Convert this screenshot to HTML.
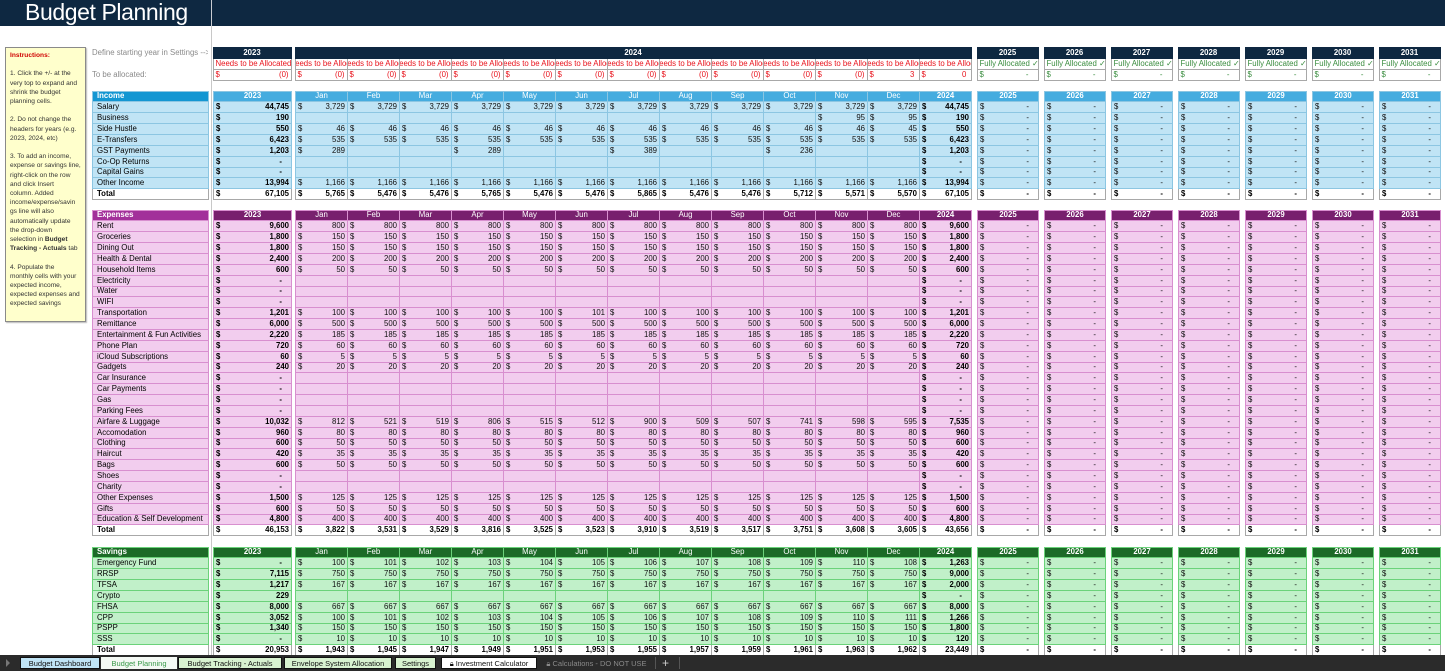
<!DOCTYPE html>
<html><head><meta charset="utf-8"><style>
*{margin:0;padding:0;box-sizing:border-box}
body{width:1445px;height:671px;overflow:hidden;background:#fff;position:relative;font-family:"Liberation Sans Narrow","Liberation Sans",sans-serif}
#hdr{position:absolute;left:0;top:0;width:1445px;height:26px;background:#0e2841}
#hdr span{position:absolute;left:25px;top:-1px;color:#fff;font:23px "Liberation Sans",sans-serif;letter-spacing:-0.4px}
#hdr b{position:absolute;left:211px;top:0;width:1px;height:26px;background:#c9ccd2}
#vl{position:absolute;left:211px;top:26px;width:1px;height:630px;background:#c8c8c8}
#ins{position:absolute;left:5px;top:47px;width:81px;height:275px;background:#ffffcc;border:1px solid #8a8a8a;box-shadow:1px 1px 1px #bbb;font:6.6px/9.2px "Liberation Sans",sans-serif;color:#333;padding:3px 0 0 4px;white-space:nowrap}
#ins .r{color:#d00000;font-weight:bold}
table{position:absolute;left:92px;border-collapse:collapse;table-layout:fixed;width:1348px;font-size:7.8px}
tr{height:10.86px}
td{padding:0 2px;border:1px solid var(--b);background:var(--r);text-align:right;white-space:nowrap;overflow:hidden;line-height:8px;color:#111}
td i{float:left;font-style:normal}
td.g{background:none;border:none}
td.l{text-align:left;padding-left:4px;color:#000}
td.b{font-weight:bold;color:#000}
td.d{padding-right:9px}
tr.h td{text-align:center;color:#fff;background:var(--hc)}
tr.h td.l{background:var(--hl);text-align:left;font-weight:bold;color:#fff}
tr.h td.g{background:none}
tr.t td{background:#fff;border-color:#a8a8a8;font-weight:bold;color:#000}
tr.t td.g{background:none}
#inc{top:90.5px;--r:#c0e4f5;--b:#8cc6e2;--hc:#45acdf;--hl:#1396d2}
#exp{top:209.5px;--r:#f2cdee;--b:#d88fcf;--hc:#78206e;--hl:#a2309a}
#sav{top:546.5px;--r:#c1f0c9;--b:#6bd27a;--hc:#1c6a27;--hl:#1c6a27}
#top{top:47px;--r:#fff;--b:#a8a8a8}
#top td.n{background:#0e2841;color:#fff;font-weight:bold;text-align:center;border-color:#0e2841}
#top td.x{border:none;background:none;color:#8a8a8a;text-align:left;padding-left:0}
#top .rd{color:#e8121b}
#top .gr{color:#3a8d3f}
#top td.c{text-align:center}
#top td.m{text-align:left;text-indent:-6px;color:#e8121b;padding:0}
#tabs{position:absolute;left:0;top:655px;width:1445px;height:16px;background:#2b2b2b}
.tab{position:absolute;top:2px;height:12px;font:7.5px/11px "Liberation Sans Narrow","Liberation Sans",sans-serif;text-align:center;border:1px solid #111;color:#111}
</style></head><body>
<div id="hdr"><span>Budget Planning</span><b></b></div>
<div id="vl"></div>
<div id="ins"><span class="r">Instructions:</span><br><br>1. Click the +/- at the<br>very top to expand and<br>shrink the budget<br>planning cells.<br><br>2. Do not change the<br>headers for years (e.g.<br>2023, 2024, etc)<br><br>3. To add an income,<br>expense or savings line,<br>right-click on the row<br>and click Insert<br>column. Added<br>income/expense/savin<br>gs line will also<br>automatically update<br>the drop-down<br>selection in <b>Budget</b><br><b>Tracking - Actuals</b> tab<br><br>4. Populate the<br>monthly cells with your<br>expected income,<br>expected expenses and<br>expected savings</div>

<table id="top"><colgroup><col style="width:116px"><col style="width:5px"><col style="width:78px"><col style="width:4px"><col span="13" style="width:52px"><col style="width:6px"><col style="width:61px"><col style="width:6px"><col style="width:61px"><col style="width:6px"><col style="width:61px"><col style="width:6px"><col style="width:61px"><col style="width:6px"><col style="width:61px"><col style="width:6px"><col style="width:61px"><col style="width:6px"><col style="width:61px"></colgroup>
<tr style="height:11px"><td class="x">Define starting year in Settings --&gt;</td><td class="g"></td><td class="n">2023</td><td class="g"></td><td class="n" colspan="13">2024</td><td class="g"></td><td class="n">2025</td><td class="g"></td><td class="n">2026</td><td class="g"></td><td class="n">2027</td><td class="g"></td><td class="n">2028</td><td class="g"></td><td class="n">2029</td><td class="g"></td><td class="n">2030</td><td class="g"></td><td class="n">2031</td></tr>
<tr style="height:10.5px"><td class="x"></td><td class="g"></td><td class="c rd">Needs to be Allocated</td><td class="g"></td><td class="m">Needs to be Allocated</td><td class="m">Needs to be Allocated</td><td class="m">Needs to be Allocated</td><td class="m">Needs to be Allocated</td><td class="m">Needs to be Allocated</td><td class="m">Needs to be Allocated</td><td class="m">Needs to be Allocated</td><td class="m">Needs to be Allocated</td><td class="m">Needs to be Allocated</td><td class="m">Needs to be Allocated</td><td class="m">Needs to be Allocated</td><td class="m">Needs to be Allocated</td><td class="m">Needs to be Allocated</td><td class="g"></td><td class="c gr">Fully Allocated ✓</td><td class="g"></td><td class="c gr">Fully Allocated ✓</td><td class="g"></td><td class="c gr">Fully Allocated ✓</td><td class="g"></td><td class="c gr">Fully Allocated ✓</td><td class="g"></td><td class="c gr">Fully Allocated ✓</td><td class="g"></td><td class="c gr">Fully Allocated ✓</td><td class="g"></td><td class="c gr">Fully Allocated ✓</td></tr>
<tr style="height:11.5px"><td class="x" style="vertical-align:middle">To be allocated:</td><td class="g"></td><td class="rd"><i>$</i>(0)</td><td class="g"></td><td class="rd"><i>$</i>(0)</td><td class="rd"><i>$</i>(0)</td><td class="rd"><i>$</i>(0)</td><td class="rd"><i>$</i>(0)</td><td class="rd"><i>$</i>(0)</td><td class="rd"><i>$</i>(0)</td><td class="rd"><i>$</i>(0)</td><td class="rd"><i>$</i>(0)</td><td class="rd"><i>$</i>(0)</td><td class="rd"><i>$</i>(0)</td><td class="rd"><i>$</i>(0)</td><td class="rd"><i>$</i>3&nbsp;</td><td class="rd"><i>$</i>0&nbsp;</td><td class="g"></td><td class="gr d"><i>$</i>-</td><td class="g"></td><td class="gr d"><i>$</i>-</td><td class="g"></td><td class="gr d"><i>$</i>-</td><td class="g"></td><td class="gr d"><i>$</i>-</td><td class="g"></td><td class="gr d"><i>$</i>-</td><td class="g"></td><td class="gr d"><i>$</i>-</td><td class="g"></td><td class="gr d"><i>$</i>-</td></tr>
</table>

<table id="inc"><colgroup><col style="width:116px"><col style="width:5px"><col style="width:78px"><col style="width:4px"><col span="13" style="width:52px"><col style="width:6px"><col style="width:61px"><col style="width:6px"><col style="width:61px"><col style="width:6px"><col style="width:61px"><col style="width:6px"><col style="width:61px"><col style="width:6px"><col style="width:61px"><col style="width:6px"><col style="width:61px"><col style="width:6px"><col style="width:61px"></colgroup>
<tr class="h"><td class="l">Income</td><td class="g"></td><td class="b">2023</td><td class="g"></td><td>Jan</td><td>Feb</td><td>Mar</td><td>Apr</td><td>May</td><td>Jun</td><td>Jul</td><td>Aug</td><td>Sep</td><td>Oct</td><td>Nov</td><td>Dec</td><td class="b">2024</td><td class="g"></td><td class="b">2025</td><td class="g"></td><td class="b">2026</td><td class="g"></td><td class="b">2027</td><td class="g"></td><td class="b">2028</td><td class="g"></td><td class="b">2029</td><td class="g"></td><td class="b">2030</td><td class="g"></td><td class="b">2031</td></tr>
<tr><td class="l">Salary</td><td class="g"></td><td class="b"><i>$</i>44,745</td><td class="g"></td><td><i>$</i>3,729</td><td><i>$</i>3,729</td><td><i>$</i>3,729</td><td><i>$</i>3,729</td><td><i>$</i>3,729</td><td><i>$</i>3,729</td><td><i>$</i>3,729</td><td><i>$</i>3,729</td><td><i>$</i>3,729</td><td><i>$</i>3,729</td><td><i>$</i>3,729</td><td><i>$</i>3,729</td><td class="b"><i>$</i>44,745</td><td class="g"></td><td class="d"><i>$</i>-</td><td class="g"></td><td class="d"><i>$</i>-</td><td class="g"></td><td class="d"><i>$</i>-</td><td class="g"></td><td class="d"><i>$</i>-</td><td class="g"></td><td class="d"><i>$</i>-</td><td class="g"></td><td class="d"><i>$</i>-</td><td class="g"></td><td class="d"><i>$</i>-</td></tr>
<tr><td class="l">Business</td><td class="g"></td><td class="b"><i>$</i>190</td><td class="g"></td><td></td><td></td><td></td><td></td><td></td><td></td><td></td><td></td><td></td><td></td><td><i>$</i>95</td><td><i>$</i>95</td><td class="b"><i>$</i>190</td><td class="g"></td><td class="d"><i>$</i>-</td><td class="g"></td><td class="d"><i>$</i>-</td><td class="g"></td><td class="d"><i>$</i>-</td><td class="g"></td><td class="d"><i>$</i>-</td><td class="g"></td><td class="d"><i>$</i>-</td><td class="g"></td><td class="d"><i>$</i>-</td><td class="g"></td><td class="d"><i>$</i>-</td></tr>
<tr><td class="l">Side Hustle</td><td class="g"></td><td class="b"><i>$</i>550</td><td class="g"></td><td><i>$</i>46</td><td><i>$</i>46</td><td><i>$</i>46</td><td><i>$</i>46</td><td><i>$</i>46</td><td><i>$</i>46</td><td><i>$</i>46</td><td><i>$</i>46</td><td><i>$</i>46</td><td><i>$</i>46</td><td><i>$</i>46</td><td><i>$</i>45</td><td class="b"><i>$</i>550</td><td class="g"></td><td class="d"><i>$</i>-</td><td class="g"></td><td class="d"><i>$</i>-</td><td class="g"></td><td class="d"><i>$</i>-</td><td class="g"></td><td class="d"><i>$</i>-</td><td class="g"></td><td class="d"><i>$</i>-</td><td class="g"></td><td class="d"><i>$</i>-</td><td class="g"></td><td class="d"><i>$</i>-</td></tr>
<tr><td class="l">E-Transfers</td><td class="g"></td><td class="b"><i>$</i>6,423</td><td class="g"></td><td><i>$</i>535</td><td><i>$</i>535</td><td><i>$</i>535</td><td><i>$</i>535</td><td><i>$</i>535</td><td><i>$</i>535</td><td><i>$</i>535</td><td><i>$</i>535</td><td><i>$</i>535</td><td><i>$</i>535</td><td><i>$</i>535</td><td><i>$</i>535</td><td class="b"><i>$</i>6,423</td><td class="g"></td><td class="d"><i>$</i>-</td><td class="g"></td><td class="d"><i>$</i>-</td><td class="g"></td><td class="d"><i>$</i>-</td><td class="g"></td><td class="d"><i>$</i>-</td><td class="g"></td><td class="d"><i>$</i>-</td><td class="g"></td><td class="d"><i>$</i>-</td><td class="g"></td><td class="d"><i>$</i>-</td></tr>
<tr><td class="l">GST Payments</td><td class="g"></td><td class="b"><i>$</i>1,203</td><td class="g"></td><td><i>$</i>289</td><td></td><td></td><td><i>$</i>289</td><td></td><td></td><td><i>$</i>389</td><td></td><td></td><td><i>$</i>236</td><td></td><td></td><td class="b"><i>$</i>1,203</td><td class="g"></td><td class="d"><i>$</i>-</td><td class="g"></td><td class="d"><i>$</i>-</td><td class="g"></td><td class="d"><i>$</i>-</td><td class="g"></td><td class="d"><i>$</i>-</td><td class="g"></td><td class="d"><i>$</i>-</td><td class="g"></td><td class="d"><i>$</i>-</td><td class="g"></td><td class="d"><i>$</i>-</td></tr>
<tr><td class="l">Co-Op Returns</td><td class="g"></td><td class="b d"><i>$</i>-</td><td class="g"></td><td></td><td></td><td></td><td></td><td></td><td></td><td></td><td></td><td></td><td></td><td></td><td></td><td class="b d"><i>$</i>-</td><td class="g"></td><td class="d"><i>$</i>-</td><td class="g"></td><td class="d"><i>$</i>-</td><td class="g"></td><td class="d"><i>$</i>-</td><td class="g"></td><td class="d"><i>$</i>-</td><td class="g"></td><td class="d"><i>$</i>-</td><td class="g"></td><td class="d"><i>$</i>-</td><td class="g"></td><td class="d"><i>$</i>-</td></tr>
<tr><td class="l">Capital Gains</td><td class="g"></td><td class="b d"><i>$</i>-</td><td class="g"></td><td></td><td></td><td></td><td></td><td></td><td></td><td></td><td></td><td></td><td></td><td></td><td></td><td class="b d"><i>$</i>-</td><td class="g"></td><td class="d"><i>$</i>-</td><td class="g"></td><td class="d"><i>$</i>-</td><td class="g"></td><td class="d"><i>$</i>-</td><td class="g"></td><td class="d"><i>$</i>-</td><td class="g"></td><td class="d"><i>$</i>-</td><td class="g"></td><td class="d"><i>$</i>-</td><td class="g"></td><td class="d"><i>$</i>-</td></tr>
<tr><td class="l">Other Income</td><td class="g"></td><td class="b"><i>$</i>13,994</td><td class="g"></td><td><i>$</i>1,166</td><td><i>$</i>1,166</td><td><i>$</i>1,166</td><td><i>$</i>1,166</td><td><i>$</i>1,166</td><td><i>$</i>1,166</td><td><i>$</i>1,166</td><td><i>$</i>1,166</td><td><i>$</i>1,166</td><td><i>$</i>1,166</td><td><i>$</i>1,166</td><td><i>$</i>1,166</td><td class="b"><i>$</i>13,994</td><td class="g"></td><td class="d"><i>$</i>-</td><td class="g"></td><td class="d"><i>$</i>-</td><td class="g"></td><td class="d"><i>$</i>-</td><td class="g"></td><td class="d"><i>$</i>-</td><td class="g"></td><td class="d"><i>$</i>-</td><td class="g"></td><td class="d"><i>$</i>-</td><td class="g"></td><td class="d"><i>$</i>-</td></tr>
<tr class="t"><td class="l">Total</td><td class="g"></td><td><i>$</i>67,105</td><td class="g"></td><td><i>$</i>5,765</td><td><i>$</i>5,476</td><td><i>$</i>5,476</td><td><i>$</i>5,765</td><td><i>$</i>5,476</td><td><i>$</i>5,476</td><td><i>$</i>5,865</td><td><i>$</i>5,476</td><td><i>$</i>5,476</td><td><i>$</i>5,712</td><td><i>$</i>5,571</td><td><i>$</i>5,570</td><td><i>$</i>67,105</td><td class="g"></td><td class="d"><i>$</i>-</td><td class="g"></td><td class="d"><i>$</i>-</td><td class="g"></td><td class="d"><i>$</i>-</td><td class="g"></td><td class="d"><i>$</i>-</td><td class="g"></td><td class="d"><i>$</i>-</td><td class="g"></td><td class="d"><i>$</i>-</td><td class="g"></td><td class="d"><i>$</i>-</td></tr>
</table>

<table id="exp"><colgroup><col style="width:116px"><col style="width:5px"><col style="width:78px"><col style="width:4px"><col span="13" style="width:52px"><col style="width:6px"><col style="width:61px"><col style="width:6px"><col style="width:61px"><col style="width:6px"><col style="width:61px"><col style="width:6px"><col style="width:61px"><col style="width:6px"><col style="width:61px"><col style="width:6px"><col style="width:61px"><col style="width:6px"><col style="width:61px"></colgroup>
<tr class="h"><td class="l">Expenses</td><td class="g"></td><td class="b">2023</td><td class="g"></td><td>Jan</td><td>Feb</td><td>Mar</td><td>Apr</td><td>May</td><td>Jun</td><td>Jul</td><td>Aug</td><td>Sep</td><td>Oct</td><td>Nov</td><td>Dec</td><td class="b">2024</td><td class="g"></td><td class="b">2025</td><td class="g"></td><td class="b">2026</td><td class="g"></td><td class="b">2027</td><td class="g"></td><td class="b">2028</td><td class="g"></td><td class="b">2029</td><td class="g"></td><td class="b">2030</td><td class="g"></td><td class="b">2031</td></tr>
<tr><td class="l">Rent</td><td class="g"></td><td class="b"><i>$</i>9,600</td><td class="g"></td><td><i>$</i>800</td><td><i>$</i>800</td><td><i>$</i>800</td><td><i>$</i>800</td><td><i>$</i>800</td><td><i>$</i>800</td><td><i>$</i>800</td><td><i>$</i>800</td><td><i>$</i>800</td><td><i>$</i>800</td><td><i>$</i>800</td><td><i>$</i>800</td><td class="b"><i>$</i>9,600</td><td class="g"></td><td class="d"><i>$</i>-</td><td class="g"></td><td class="d"><i>$</i>-</td><td class="g"></td><td class="d"><i>$</i>-</td><td class="g"></td><td class="d"><i>$</i>-</td><td class="g"></td><td class="d"><i>$</i>-</td><td class="g"></td><td class="d"><i>$</i>-</td><td class="g"></td><td class="d"><i>$</i>-</td></tr>
<tr><td class="l">Groceries</td><td class="g"></td><td class="b"><i>$</i>1,800</td><td class="g"></td><td><i>$</i>150</td><td><i>$</i>150</td><td><i>$</i>150</td><td><i>$</i>150</td><td><i>$</i>150</td><td><i>$</i>150</td><td><i>$</i>150</td><td><i>$</i>150</td><td><i>$</i>150</td><td><i>$</i>150</td><td><i>$</i>150</td><td><i>$</i>150</td><td class="b"><i>$</i>1,800</td><td class="g"></td><td class="d"><i>$</i>-</td><td class="g"></td><td class="d"><i>$</i>-</td><td class="g"></td><td class="d"><i>$</i>-</td><td class="g"></td><td class="d"><i>$</i>-</td><td class="g"></td><td class="d"><i>$</i>-</td><td class="g"></td><td class="d"><i>$</i>-</td><td class="g"></td><td class="d"><i>$</i>-</td></tr>
<tr><td class="l">Dining Out</td><td class="g"></td><td class="b"><i>$</i>1,800</td><td class="g"></td><td><i>$</i>150</td><td><i>$</i>150</td><td><i>$</i>150</td><td><i>$</i>150</td><td><i>$</i>150</td><td><i>$</i>150</td><td><i>$</i>150</td><td><i>$</i>150</td><td><i>$</i>150</td><td><i>$</i>150</td><td><i>$</i>150</td><td><i>$</i>150</td><td class="b"><i>$</i>1,800</td><td class="g"></td><td class="d"><i>$</i>-</td><td class="g"></td><td class="d"><i>$</i>-</td><td class="g"></td><td class="d"><i>$</i>-</td><td class="g"></td><td class="d"><i>$</i>-</td><td class="g"></td><td class="d"><i>$</i>-</td><td class="g"></td><td class="d"><i>$</i>-</td><td class="g"></td><td class="d"><i>$</i>-</td></tr>
<tr><td class="l">Health &amp; Dental</td><td class="g"></td><td class="b"><i>$</i>2,400</td><td class="g"></td><td><i>$</i>200</td><td><i>$</i>200</td><td><i>$</i>200</td><td><i>$</i>200</td><td><i>$</i>200</td><td><i>$</i>200</td><td><i>$</i>200</td><td><i>$</i>200</td><td><i>$</i>200</td><td><i>$</i>200</td><td><i>$</i>200</td><td><i>$</i>200</td><td class="b"><i>$</i>2,400</td><td class="g"></td><td class="d"><i>$</i>-</td><td class="g"></td><td class="d"><i>$</i>-</td><td class="g"></td><td class="d"><i>$</i>-</td><td class="g"></td><td class="d"><i>$</i>-</td><td class="g"></td><td class="d"><i>$</i>-</td><td class="g"></td><td class="d"><i>$</i>-</td><td class="g"></td><td class="d"><i>$</i>-</td></tr>
<tr><td class="l">Household Items</td><td class="g"></td><td class="b"><i>$</i>600</td><td class="g"></td><td><i>$</i>50</td><td><i>$</i>50</td><td><i>$</i>50</td><td><i>$</i>50</td><td><i>$</i>50</td><td><i>$</i>50</td><td><i>$</i>50</td><td><i>$</i>50</td><td><i>$</i>50</td><td><i>$</i>50</td><td><i>$</i>50</td><td><i>$</i>50</td><td class="b"><i>$</i>600</td><td class="g"></td><td class="d"><i>$</i>-</td><td class="g"></td><td class="d"><i>$</i>-</td><td class="g"></td><td class="d"><i>$</i>-</td><td class="g"></td><td class="d"><i>$</i>-</td><td class="g"></td><td class="d"><i>$</i>-</td><td class="g"></td><td class="d"><i>$</i>-</td><td class="g"></td><td class="d"><i>$</i>-</td></tr>
<tr><td class="l">Electricity</td><td class="g"></td><td class="b d"><i>$</i>-</td><td class="g"></td><td></td><td></td><td></td><td></td><td></td><td></td><td></td><td></td><td></td><td></td><td></td><td></td><td class="b d"><i>$</i>-</td><td class="g"></td><td class="d"><i>$</i>-</td><td class="g"></td><td class="d"><i>$</i>-</td><td class="g"></td><td class="d"><i>$</i>-</td><td class="g"></td><td class="d"><i>$</i>-</td><td class="g"></td><td class="d"><i>$</i>-</td><td class="g"></td><td class="d"><i>$</i>-</td><td class="g"></td><td class="d"><i>$</i>-</td></tr>
<tr><td class="l">Water</td><td class="g"></td><td class="b d"><i>$</i>-</td><td class="g"></td><td></td><td></td><td></td><td></td><td></td><td></td><td></td><td></td><td></td><td></td><td></td><td></td><td class="b d"><i>$</i>-</td><td class="g"></td><td class="d"><i>$</i>-</td><td class="g"></td><td class="d"><i>$</i>-</td><td class="g"></td><td class="d"><i>$</i>-</td><td class="g"></td><td class="d"><i>$</i>-</td><td class="g"></td><td class="d"><i>$</i>-</td><td class="g"></td><td class="d"><i>$</i>-</td><td class="g"></td><td class="d"><i>$</i>-</td></tr>
<tr><td class="l">WIFI</td><td class="g"></td><td class="b d"><i>$</i>-</td><td class="g"></td><td></td><td></td><td></td><td></td><td></td><td></td><td></td><td></td><td></td><td></td><td></td><td></td><td class="b d"><i>$</i>-</td><td class="g"></td><td class="d"><i>$</i>-</td><td class="g"></td><td class="d"><i>$</i>-</td><td class="g"></td><td class="d"><i>$</i>-</td><td class="g"></td><td class="d"><i>$</i>-</td><td class="g"></td><td class="d"><i>$</i>-</td><td class="g"></td><td class="d"><i>$</i>-</td><td class="g"></td><td class="d"><i>$</i>-</td></tr>
<tr><td class="l">Transportation</td><td class="g"></td><td class="b"><i>$</i>1,201</td><td class="g"></td><td><i>$</i>100</td><td><i>$</i>100</td><td><i>$</i>100</td><td><i>$</i>100</td><td><i>$</i>100</td><td><i>$</i>101</td><td><i>$</i>100</td><td><i>$</i>100</td><td><i>$</i>100</td><td><i>$</i>100</td><td><i>$</i>100</td><td><i>$</i>100</td><td class="b"><i>$</i>1,201</td><td class="g"></td><td class="d"><i>$</i>-</td><td class="g"></td><td class="d"><i>$</i>-</td><td class="g"></td><td class="d"><i>$</i>-</td><td class="g"></td><td class="d"><i>$</i>-</td><td class="g"></td><td class="d"><i>$</i>-</td><td class="g"></td><td class="d"><i>$</i>-</td><td class="g"></td><td class="d"><i>$</i>-</td></tr>
<tr><td class="l">Remittance</td><td class="g"></td><td class="b"><i>$</i>6,000</td><td class="g"></td><td><i>$</i>500</td><td><i>$</i>500</td><td><i>$</i>500</td><td><i>$</i>500</td><td><i>$</i>500</td><td><i>$</i>500</td><td><i>$</i>500</td><td><i>$</i>500</td><td><i>$</i>500</td><td><i>$</i>500</td><td><i>$</i>500</td><td><i>$</i>500</td><td class="b"><i>$</i>6,000</td><td class="g"></td><td class="d"><i>$</i>-</td><td class="g"></td><td class="d"><i>$</i>-</td><td class="g"></td><td class="d"><i>$</i>-</td><td class="g"></td><td class="d"><i>$</i>-</td><td class="g"></td><td class="d"><i>$</i>-</td><td class="g"></td><td class="d"><i>$</i>-</td><td class="g"></td><td class="d"><i>$</i>-</td></tr>
<tr><td class="l">Entertainment &amp; Fun Activities</td><td class="g"></td><td class="b"><i>$</i>2,220</td><td class="g"></td><td><i>$</i>185</td><td><i>$</i>185</td><td><i>$</i>185</td><td><i>$</i>185</td><td><i>$</i>185</td><td><i>$</i>185</td><td><i>$</i>185</td><td><i>$</i>185</td><td><i>$</i>185</td><td><i>$</i>185</td><td><i>$</i>185</td><td><i>$</i>185</td><td class="b"><i>$</i>2,220</td><td class="g"></td><td class="d"><i>$</i>-</td><td class="g"></td><td class="d"><i>$</i>-</td><td class="g"></td><td class="d"><i>$</i>-</td><td class="g"></td><td class="d"><i>$</i>-</td><td class="g"></td><td class="d"><i>$</i>-</td><td class="g"></td><td class="d"><i>$</i>-</td><td class="g"></td><td class="d"><i>$</i>-</td></tr>
<tr><td class="l">Phone Plan</td><td class="g"></td><td class="b"><i>$</i>720</td><td class="g"></td><td><i>$</i>60</td><td><i>$</i>60</td><td><i>$</i>60</td><td><i>$</i>60</td><td><i>$</i>60</td><td><i>$</i>60</td><td><i>$</i>60</td><td><i>$</i>60</td><td><i>$</i>60</td><td><i>$</i>60</td><td><i>$</i>60</td><td><i>$</i>60</td><td class="b"><i>$</i>720</td><td class="g"></td><td class="d"><i>$</i>-</td><td class="g"></td><td class="d"><i>$</i>-</td><td class="g"></td><td class="d"><i>$</i>-</td><td class="g"></td><td class="d"><i>$</i>-</td><td class="g"></td><td class="d"><i>$</i>-</td><td class="g"></td><td class="d"><i>$</i>-</td><td class="g"></td><td class="d"><i>$</i>-</td></tr>
<tr><td class="l">iCloud Subscriptions</td><td class="g"></td><td class="b"><i>$</i>60</td><td class="g"></td><td><i>$</i>5</td><td><i>$</i>5</td><td><i>$</i>5</td><td><i>$</i>5</td><td><i>$</i>5</td><td><i>$</i>5</td><td><i>$</i>5</td><td><i>$</i>5</td><td><i>$</i>5</td><td><i>$</i>5</td><td><i>$</i>5</td><td><i>$</i>5</td><td class="b"><i>$</i>60</td><td class="g"></td><td class="d"><i>$</i>-</td><td class="g"></td><td class="d"><i>$</i>-</td><td class="g"></td><td class="d"><i>$</i>-</td><td class="g"></td><td class="d"><i>$</i>-</td><td class="g"></td><td class="d"><i>$</i>-</td><td class="g"></td><td class="d"><i>$</i>-</td><td class="g"></td><td class="d"><i>$</i>-</td></tr>
<tr><td class="l">Gadgets</td><td class="g"></td><td class="b"><i>$</i>240</td><td class="g"></td><td><i>$</i>20</td><td><i>$</i>20</td><td><i>$</i>20</td><td><i>$</i>20</td><td><i>$</i>20</td><td><i>$</i>20</td><td><i>$</i>20</td><td><i>$</i>20</td><td><i>$</i>20</td><td><i>$</i>20</td><td><i>$</i>20</td><td><i>$</i>20</td><td class="b"><i>$</i>240</td><td class="g"></td><td class="d"><i>$</i>-</td><td class="g"></td><td class="d"><i>$</i>-</td><td class="g"></td><td class="d"><i>$</i>-</td><td class="g"></td><td class="d"><i>$</i>-</td><td class="g"></td><td class="d"><i>$</i>-</td><td class="g"></td><td class="d"><i>$</i>-</td><td class="g"></td><td class="d"><i>$</i>-</td></tr>
<tr><td class="l">Car Insurance</td><td class="g"></td><td class="b d"><i>$</i>-</td><td class="g"></td><td></td><td></td><td></td><td></td><td></td><td></td><td></td><td></td><td></td><td></td><td></td><td></td><td class="b d"><i>$</i>-</td><td class="g"></td><td class="d"><i>$</i>-</td><td class="g"></td><td class="d"><i>$</i>-</td><td class="g"></td><td class="d"><i>$</i>-</td><td class="g"></td><td class="d"><i>$</i>-</td><td class="g"></td><td class="d"><i>$</i>-</td><td class="g"></td><td class="d"><i>$</i>-</td><td class="g"></td><td class="d"><i>$</i>-</td></tr>
<tr><td class="l">Car Payments</td><td class="g"></td><td class="b d"><i>$</i>-</td><td class="g"></td><td></td><td></td><td></td><td></td><td></td><td></td><td></td><td></td><td></td><td></td><td></td><td></td><td class="b d"><i>$</i>-</td><td class="g"></td><td class="d"><i>$</i>-</td><td class="g"></td><td class="d"><i>$</i>-</td><td class="g"></td><td class="d"><i>$</i>-</td><td class="g"></td><td class="d"><i>$</i>-</td><td class="g"></td><td class="d"><i>$</i>-</td><td class="g"></td><td class="d"><i>$</i>-</td><td class="g"></td><td class="d"><i>$</i>-</td></tr>
<tr><td class="l">Gas</td><td class="g"></td><td class="b d"><i>$</i>-</td><td class="g"></td><td></td><td></td><td></td><td></td><td></td><td></td><td></td><td></td><td></td><td></td><td></td><td></td><td class="b d"><i>$</i>-</td><td class="g"></td><td class="d"><i>$</i>-</td><td class="g"></td><td class="d"><i>$</i>-</td><td class="g"></td><td class="d"><i>$</i>-</td><td class="g"></td><td class="d"><i>$</i>-</td><td class="g"></td><td class="d"><i>$</i>-</td><td class="g"></td><td class="d"><i>$</i>-</td><td class="g"></td><td class="d"><i>$</i>-</td></tr>
<tr><td class="l">Parking Fees</td><td class="g"></td><td class="b d"><i>$</i>-</td><td class="g"></td><td></td><td></td><td></td><td></td><td></td><td></td><td></td><td></td><td></td><td></td><td></td><td></td><td class="b d"><i>$</i>-</td><td class="g"></td><td class="d"><i>$</i>-</td><td class="g"></td><td class="d"><i>$</i>-</td><td class="g"></td><td class="d"><i>$</i>-</td><td class="g"></td><td class="d"><i>$</i>-</td><td class="g"></td><td class="d"><i>$</i>-</td><td class="g"></td><td class="d"><i>$</i>-</td><td class="g"></td><td class="d"><i>$</i>-</td></tr>
<tr><td class="l">Airfare &amp; Luggage</td><td class="g"></td><td class="b"><i>$</i>10,032</td><td class="g"></td><td><i>$</i>812</td><td><i>$</i>521</td><td><i>$</i>519</td><td><i>$</i>806</td><td><i>$</i>515</td><td><i>$</i>512</td><td><i>$</i>900</td><td><i>$</i>509</td><td><i>$</i>507</td><td><i>$</i>741</td><td><i>$</i>598</td><td><i>$</i>595</td><td class="b"><i>$</i>7,535</td><td class="g"></td><td class="d"><i>$</i>-</td><td class="g"></td><td class="d"><i>$</i>-</td><td class="g"></td><td class="d"><i>$</i>-</td><td class="g"></td><td class="d"><i>$</i>-</td><td class="g"></td><td class="d"><i>$</i>-</td><td class="g"></td><td class="d"><i>$</i>-</td><td class="g"></td><td class="d"><i>$</i>-</td></tr>
<tr><td class="l">Accomodation</td><td class="g"></td><td class="b"><i>$</i>960</td><td class="g"></td><td><i>$</i>80</td><td><i>$</i>80</td><td><i>$</i>80</td><td><i>$</i>80</td><td><i>$</i>80</td><td><i>$</i>80</td><td><i>$</i>80</td><td><i>$</i>80</td><td><i>$</i>80</td><td><i>$</i>80</td><td><i>$</i>80</td><td><i>$</i>80</td><td class="b"><i>$</i>960</td><td class="g"></td><td class="d"><i>$</i>-</td><td class="g"></td><td class="d"><i>$</i>-</td><td class="g"></td><td class="d"><i>$</i>-</td><td class="g"></td><td class="d"><i>$</i>-</td><td class="g"></td><td class="d"><i>$</i>-</td><td class="g"></td><td class="d"><i>$</i>-</td><td class="g"></td><td class="d"><i>$</i>-</td></tr>
<tr><td class="l">Clothing</td><td class="g"></td><td class="b"><i>$</i>600</td><td class="g"></td><td><i>$</i>50</td><td><i>$</i>50</td><td><i>$</i>50</td><td><i>$</i>50</td><td><i>$</i>50</td><td><i>$</i>50</td><td><i>$</i>50</td><td><i>$</i>50</td><td><i>$</i>50</td><td><i>$</i>50</td><td><i>$</i>50</td><td><i>$</i>50</td><td class="b"><i>$</i>600</td><td class="g"></td><td class="d"><i>$</i>-</td><td class="g"></td><td class="d"><i>$</i>-</td><td class="g"></td><td class="d"><i>$</i>-</td><td class="g"></td><td class="d"><i>$</i>-</td><td class="g"></td><td class="d"><i>$</i>-</td><td class="g"></td><td class="d"><i>$</i>-</td><td class="g"></td><td class="d"><i>$</i>-</td></tr>
<tr><td class="l">Haircut</td><td class="g"></td><td class="b"><i>$</i>420</td><td class="g"></td><td><i>$</i>35</td><td><i>$</i>35</td><td><i>$</i>35</td><td><i>$</i>35</td><td><i>$</i>35</td><td><i>$</i>35</td><td><i>$</i>35</td><td><i>$</i>35</td><td><i>$</i>35</td><td><i>$</i>35</td><td><i>$</i>35</td><td><i>$</i>35</td><td class="b"><i>$</i>420</td><td class="g"></td><td class="d"><i>$</i>-</td><td class="g"></td><td class="d"><i>$</i>-</td><td class="g"></td><td class="d"><i>$</i>-</td><td class="g"></td><td class="d"><i>$</i>-</td><td class="g"></td><td class="d"><i>$</i>-</td><td class="g"></td><td class="d"><i>$</i>-</td><td class="g"></td><td class="d"><i>$</i>-</td></tr>
<tr><td class="l">Bags</td><td class="g"></td><td class="b"><i>$</i>600</td><td class="g"></td><td><i>$</i>50</td><td><i>$</i>50</td><td><i>$</i>50</td><td><i>$</i>50</td><td><i>$</i>50</td><td><i>$</i>50</td><td><i>$</i>50</td><td><i>$</i>50</td><td><i>$</i>50</td><td><i>$</i>50</td><td><i>$</i>50</td><td><i>$</i>50</td><td class="b"><i>$</i>600</td><td class="g"></td><td class="d"><i>$</i>-</td><td class="g"></td><td class="d"><i>$</i>-</td><td class="g"></td><td class="d"><i>$</i>-</td><td class="g"></td><td class="d"><i>$</i>-</td><td class="g"></td><td class="d"><i>$</i>-</td><td class="g"></td><td class="d"><i>$</i>-</td><td class="g"></td><td class="d"><i>$</i>-</td></tr>
<tr><td class="l">Shoes</td><td class="g"></td><td class="b d"><i>$</i>-</td><td class="g"></td><td></td><td></td><td></td><td></td><td></td><td></td><td></td><td></td><td></td><td></td><td></td><td></td><td class="b d"><i>$</i>-</td><td class="g"></td><td class="d"><i>$</i>-</td><td class="g"></td><td class="d"><i>$</i>-</td><td class="g"></td><td class="d"><i>$</i>-</td><td class="g"></td><td class="d"><i>$</i>-</td><td class="g"></td><td class="d"><i>$</i>-</td><td class="g"></td><td class="d"><i>$</i>-</td><td class="g"></td><td class="d"><i>$</i>-</td></tr>
<tr><td class="l">Charity</td><td class="g"></td><td class="b d"><i>$</i>-</td><td class="g"></td><td></td><td></td><td></td><td></td><td></td><td></td><td></td><td></td><td></td><td></td><td></td><td></td><td class="b d"><i>$</i>-</td><td class="g"></td><td class="d"><i>$</i>-</td><td class="g"></td><td class="d"><i>$</i>-</td><td class="g"></td><td class="d"><i>$</i>-</td><td class="g"></td><td class="d"><i>$</i>-</td><td class="g"></td><td class="d"><i>$</i>-</td><td class="g"></td><td class="d"><i>$</i>-</td><td class="g"></td><td class="d"><i>$</i>-</td></tr>
<tr><td class="l">Other Expenses</td><td class="g"></td><td class="b"><i>$</i>1,500</td><td class="g"></td><td><i>$</i>125</td><td><i>$</i>125</td><td><i>$</i>125</td><td><i>$</i>125</td><td><i>$</i>125</td><td><i>$</i>125</td><td><i>$</i>125</td><td><i>$</i>125</td><td><i>$</i>125</td><td><i>$</i>125</td><td><i>$</i>125</td><td><i>$</i>125</td><td class="b"><i>$</i>1,500</td><td class="g"></td><td class="d"><i>$</i>-</td><td class="g"></td><td class="d"><i>$</i>-</td><td class="g"></td><td class="d"><i>$</i>-</td><td class="g"></td><td class="d"><i>$</i>-</td><td class="g"></td><td class="d"><i>$</i>-</td><td class="g"></td><td class="d"><i>$</i>-</td><td class="g"></td><td class="d"><i>$</i>-</td></tr>
<tr><td class="l">Gifts</td><td class="g"></td><td class="b"><i>$</i>600</td><td class="g"></td><td><i>$</i>50</td><td><i>$</i>50</td><td><i>$</i>50</td><td><i>$</i>50</td><td><i>$</i>50</td><td><i>$</i>50</td><td><i>$</i>50</td><td><i>$</i>50</td><td><i>$</i>50</td><td><i>$</i>50</td><td><i>$</i>50</td><td><i>$</i>50</td><td class="b"><i>$</i>600</td><td class="g"></td><td class="d"><i>$</i>-</td><td class="g"></td><td class="d"><i>$</i>-</td><td class="g"></td><td class="d"><i>$</i>-</td><td class="g"></td><td class="d"><i>$</i>-</td><td class="g"></td><td class="d"><i>$</i>-</td><td class="g"></td><td class="d"><i>$</i>-</td><td class="g"></td><td class="d"><i>$</i>-</td></tr>
<tr><td class="l">Education &amp; Self Development</td><td class="g"></td><td class="b"><i>$</i>4,800</td><td class="g"></td><td><i>$</i>400</td><td><i>$</i>400</td><td><i>$</i>400</td><td><i>$</i>400</td><td><i>$</i>400</td><td><i>$</i>400</td><td><i>$</i>400</td><td><i>$</i>400</td><td><i>$</i>400</td><td><i>$</i>400</td><td><i>$</i>400</td><td><i>$</i>400</td><td class="b"><i>$</i>4,800</td><td class="g"></td><td class="d"><i>$</i>-</td><td class="g"></td><td class="d"><i>$</i>-</td><td class="g"></td><td class="d"><i>$</i>-</td><td class="g"></td><td class="d"><i>$</i>-</td><td class="g"></td><td class="d"><i>$</i>-</td><td class="g"></td><td class="d"><i>$</i>-</td><td class="g"></td><td class="d"><i>$</i>-</td></tr>
<tr class="t"><td class="l">Total</td><td class="g"></td><td><i>$</i>46,153</td><td class="g"></td><td><i>$</i>3,822</td><td><i>$</i>3,531</td><td><i>$</i>3,529</td><td><i>$</i>3,816</td><td><i>$</i>3,525</td><td><i>$</i>3,523</td><td><i>$</i>3,910</td><td><i>$</i>3,519</td><td><i>$</i>3,517</td><td><i>$</i>3,751</td><td><i>$</i>3,608</td><td><i>$</i>3,605</td><td><i>$</i>43,656</td><td class="g"></td><td class="d"><i>$</i>-</td><td class="g"></td><td class="d"><i>$</i>-</td><td class="g"></td><td class="d"><i>$</i>-</td><td class="g"></td><td class="d"><i>$</i>-</td><td class="g"></td><td class="d"><i>$</i>-</td><td class="g"></td><td class="d"><i>$</i>-</td><td class="g"></td><td class="d"><i>$</i>-</td></tr>
</table>

<table id="sav"><colgroup><col style="width:116px"><col style="width:5px"><col style="width:78px"><col style="width:4px"><col span="13" style="width:52px"><col style="width:6px"><col style="width:61px"><col style="width:6px"><col style="width:61px"><col style="width:6px"><col style="width:61px"><col style="width:6px"><col style="width:61px"><col style="width:6px"><col style="width:61px"><col style="width:6px"><col style="width:61px"><col style="width:6px"><col style="width:61px"></colgroup>
<tr class="h"><td class="l">Savings</td><td class="g"></td><td class="b">2023</td><td class="g"></td><td>Jan</td><td>Feb</td><td>Mar</td><td>Apr</td><td>May</td><td>Jun</td><td>Jul</td><td>Aug</td><td>Sep</td><td>Oct</td><td>Nov</td><td>Dec</td><td class="b">2024</td><td class="g"></td><td class="b">2025</td><td class="g"></td><td class="b">2026</td><td class="g"></td><td class="b">2027</td><td class="g"></td><td class="b">2028</td><td class="g"></td><td class="b">2029</td><td class="g"></td><td class="b">2030</td><td class="g"></td><td class="b">2031</td></tr>
<tr><td class="l">Emergency Fund</td><td class="g"></td><td class="b d"><i>$</i>-</td><td class="g"></td><td><i>$</i>100</td><td><i>$</i>101</td><td><i>$</i>102</td><td><i>$</i>103</td><td><i>$</i>104</td><td><i>$</i>105</td><td><i>$</i>106</td><td><i>$</i>107</td><td><i>$</i>108</td><td><i>$</i>109</td><td><i>$</i>110</td><td><i>$</i>108</td><td class="b"><i>$</i>1,263</td><td class="g"></td><td class="d"><i>$</i>-</td><td class="g"></td><td class="d"><i>$</i>-</td><td class="g"></td><td class="d"><i>$</i>-</td><td class="g"></td><td class="d"><i>$</i>-</td><td class="g"></td><td class="d"><i>$</i>-</td><td class="g"></td><td class="d"><i>$</i>-</td><td class="g"></td><td class="d"><i>$</i>-</td></tr>
<tr><td class="l">RRSP</td><td class="g"></td><td class="b"><i>$</i>7,115</td><td class="g"></td><td><i>$</i>750</td><td><i>$</i>750</td><td><i>$</i>750</td><td><i>$</i>750</td><td><i>$</i>750</td><td><i>$</i>750</td><td><i>$</i>750</td><td><i>$</i>750</td><td><i>$</i>750</td><td><i>$</i>750</td><td><i>$</i>750</td><td><i>$</i>750</td><td class="b"><i>$</i>9,000</td><td class="g"></td><td class="d"><i>$</i>-</td><td class="g"></td><td class="d"><i>$</i>-</td><td class="g"></td><td class="d"><i>$</i>-</td><td class="g"></td><td class="d"><i>$</i>-</td><td class="g"></td><td class="d"><i>$</i>-</td><td class="g"></td><td class="d"><i>$</i>-</td><td class="g"></td><td class="d"><i>$</i>-</td></tr>
<tr><td class="l">TFSA</td><td class="g"></td><td class="b"><i>$</i>1,217</td><td class="g"></td><td><i>$</i>167</td><td><i>$</i>167</td><td><i>$</i>167</td><td><i>$</i>167</td><td><i>$</i>167</td><td><i>$</i>167</td><td><i>$</i>167</td><td><i>$</i>167</td><td><i>$</i>167</td><td><i>$</i>167</td><td><i>$</i>167</td><td><i>$</i>167</td><td class="b"><i>$</i>2,000</td><td class="g"></td><td class="d"><i>$</i>-</td><td class="g"></td><td class="d"><i>$</i>-</td><td class="g"></td><td class="d"><i>$</i>-</td><td class="g"></td><td class="d"><i>$</i>-</td><td class="g"></td><td class="d"><i>$</i>-</td><td class="g"></td><td class="d"><i>$</i>-</td><td class="g"></td><td class="d"><i>$</i>-</td></tr>
<tr><td class="l">Crypto</td><td class="g"></td><td class="b"><i>$</i>229</td><td class="g"></td><td></td><td></td><td></td><td></td><td></td><td></td><td></td><td></td><td></td><td></td><td></td><td></td><td class="b d"><i>$</i>-</td><td class="g"></td><td class="d"><i>$</i>-</td><td class="g"></td><td class="d"><i>$</i>-</td><td class="g"></td><td class="d"><i>$</i>-</td><td class="g"></td><td class="d"><i>$</i>-</td><td class="g"></td><td class="d"><i>$</i>-</td><td class="g"></td><td class="d"><i>$</i>-</td><td class="g"></td><td class="d"><i>$</i>-</td></tr>
<tr><td class="l">FHSA</td><td class="g"></td><td class="b"><i>$</i>8,000</td><td class="g"></td><td><i>$</i>667</td><td><i>$</i>667</td><td><i>$</i>667</td><td><i>$</i>667</td><td><i>$</i>667</td><td><i>$</i>667</td><td><i>$</i>667</td><td><i>$</i>667</td><td><i>$</i>667</td><td><i>$</i>667</td><td><i>$</i>667</td><td><i>$</i>667</td><td class="b"><i>$</i>8,000</td><td class="g"></td><td class="d"><i>$</i>-</td><td class="g"></td><td class="d"><i>$</i>-</td><td class="g"></td><td class="d"><i>$</i>-</td><td class="g"></td><td class="d"><i>$</i>-</td><td class="g"></td><td class="d"><i>$</i>-</td><td class="g"></td><td class="d"><i>$</i>-</td><td class="g"></td><td class="d"><i>$</i>-</td></tr>
<tr><td class="l">CPP</td><td class="g"></td><td class="b"><i>$</i>3,052</td><td class="g"></td><td><i>$</i>100</td><td><i>$</i>101</td><td><i>$</i>102</td><td><i>$</i>103</td><td><i>$</i>104</td><td><i>$</i>105</td><td><i>$</i>106</td><td><i>$</i>107</td><td><i>$</i>108</td><td><i>$</i>109</td><td><i>$</i>110</td><td><i>$</i>111</td><td class="b"><i>$</i>1,266</td><td class="g"></td><td class="d"><i>$</i>-</td><td class="g"></td><td class="d"><i>$</i>-</td><td class="g"></td><td class="d"><i>$</i>-</td><td class="g"></td><td class="d"><i>$</i>-</td><td class="g"></td><td class="d"><i>$</i>-</td><td class="g"></td><td class="d"><i>$</i>-</td><td class="g"></td><td class="d"><i>$</i>-</td></tr>
<tr><td class="l">PSPP</td><td class="g"></td><td class="b"><i>$</i>1,340</td><td class="g"></td><td><i>$</i>150</td><td><i>$</i>150</td><td><i>$</i>150</td><td><i>$</i>150</td><td><i>$</i>150</td><td><i>$</i>150</td><td><i>$</i>150</td><td><i>$</i>150</td><td><i>$</i>150</td><td><i>$</i>150</td><td><i>$</i>150</td><td><i>$</i>150</td><td class="b"><i>$</i>1,800</td><td class="g"></td><td class="d"><i>$</i>-</td><td class="g"></td><td class="d"><i>$</i>-</td><td class="g"></td><td class="d"><i>$</i>-</td><td class="g"></td><td class="d"><i>$</i>-</td><td class="g"></td><td class="d"><i>$</i>-</td><td class="g"></td><td class="d"><i>$</i>-</td><td class="g"></td><td class="d"><i>$</i>-</td></tr>
<tr><td class="l">SSS</td><td class="g"></td><td class="b d"><i>$</i>-</td><td class="g"></td><td><i>$</i>10</td><td><i>$</i>10</td><td><i>$</i>10</td><td><i>$</i>10</td><td><i>$</i>10</td><td><i>$</i>10</td><td><i>$</i>10</td><td><i>$</i>10</td><td><i>$</i>10</td><td><i>$</i>10</td><td><i>$</i>10</td><td><i>$</i>10</td><td class="b"><i>$</i>120</td><td class="g"></td><td class="d"><i>$</i>-</td><td class="g"></td><td class="d"><i>$</i>-</td><td class="g"></td><td class="d"><i>$</i>-</td><td class="g"></td><td class="d"><i>$</i>-</td><td class="g"></td><td class="d"><i>$</i>-</td><td class="g"></td><td class="d"><i>$</i>-</td><td class="g"></td><td class="d"><i>$</i>-</td></tr>
<tr class="t"><td class="l">Total</td><td class="g"></td><td><i>$</i>20,953</td><td class="g"></td><td><i>$</i>1,943</td><td><i>$</i>1,945</td><td><i>$</i>1,947</td><td><i>$</i>1,949</td><td><i>$</i>1,951</td><td><i>$</i>1,953</td><td><i>$</i>1,955</td><td><i>$</i>1,957</td><td><i>$</i>1,959</td><td><i>$</i>1,961</td><td><i>$</i>1,963</td><td><i>$</i>1,962</td><td><i>$</i>23,449</td><td class="g"></td><td class="d"><i>$</i>-</td><td class="g"></td><td class="d"><i>$</i>-</td><td class="g"></td><td class="d"><i>$</i>-</td><td class="g"></td><td class="d"><i>$</i>-</td><td class="g"></td><td class="d"><i>$</i>-</td><td class="g"></td><td class="d"><i>$</i>-</td><td class="g"></td><td class="d"><i>$</i>-</td></tr>
</table>

<div id="tabs">
<div style="position:absolute;left:6px;top:4px;width:0;height:0;border-left:4px solid #777;border-top:4px solid transparent;border-bottom:4px solid transparent"></div>
<div class="tab" style="left:20px;width:80px;background:#c0e4f5">Budget Dashboard</div>
<div class="tab" style="left:101px;width:76px;background:#f4f9f4;color:#3a9a4a;border-color:#f4f9f4">Budget Planning</div>
<div class="tab" style="left:178px;width:104px;background:#d8f2d0">Budget Tracking - Actuals</div>
<div class="tab" style="left:284px;width:108px;background:#d8f2d0">Envelope System Allocation</div>
<div class="tab" style="left:395px;width:41px;background:#d8f2d0">Settings</div>
<div class="tab" style="left:441px;width:96px;background:#fff">&#128274;&#xFE0E; Investment Calculator</div>
<div class="tab" style="left:540px;width:113px;background:#2b2b2b;color:#8a8a8a;border-color:#2b2b2b">&#128274;&#xFE0E; Calculations - DO NOT USE</div>
<div style="position:absolute;left:655px;top:2px;width:1px;height:12px;background:#555"></div>
<div style="position:absolute;left:662px;top:0;color:#ccc;font:12px/16px 'Liberation Sans',sans-serif">+</div>
<div style="position:absolute;left:679px;top:2px;width:1px;height:12px;background:#555"></div>
</div>
</body></html>
